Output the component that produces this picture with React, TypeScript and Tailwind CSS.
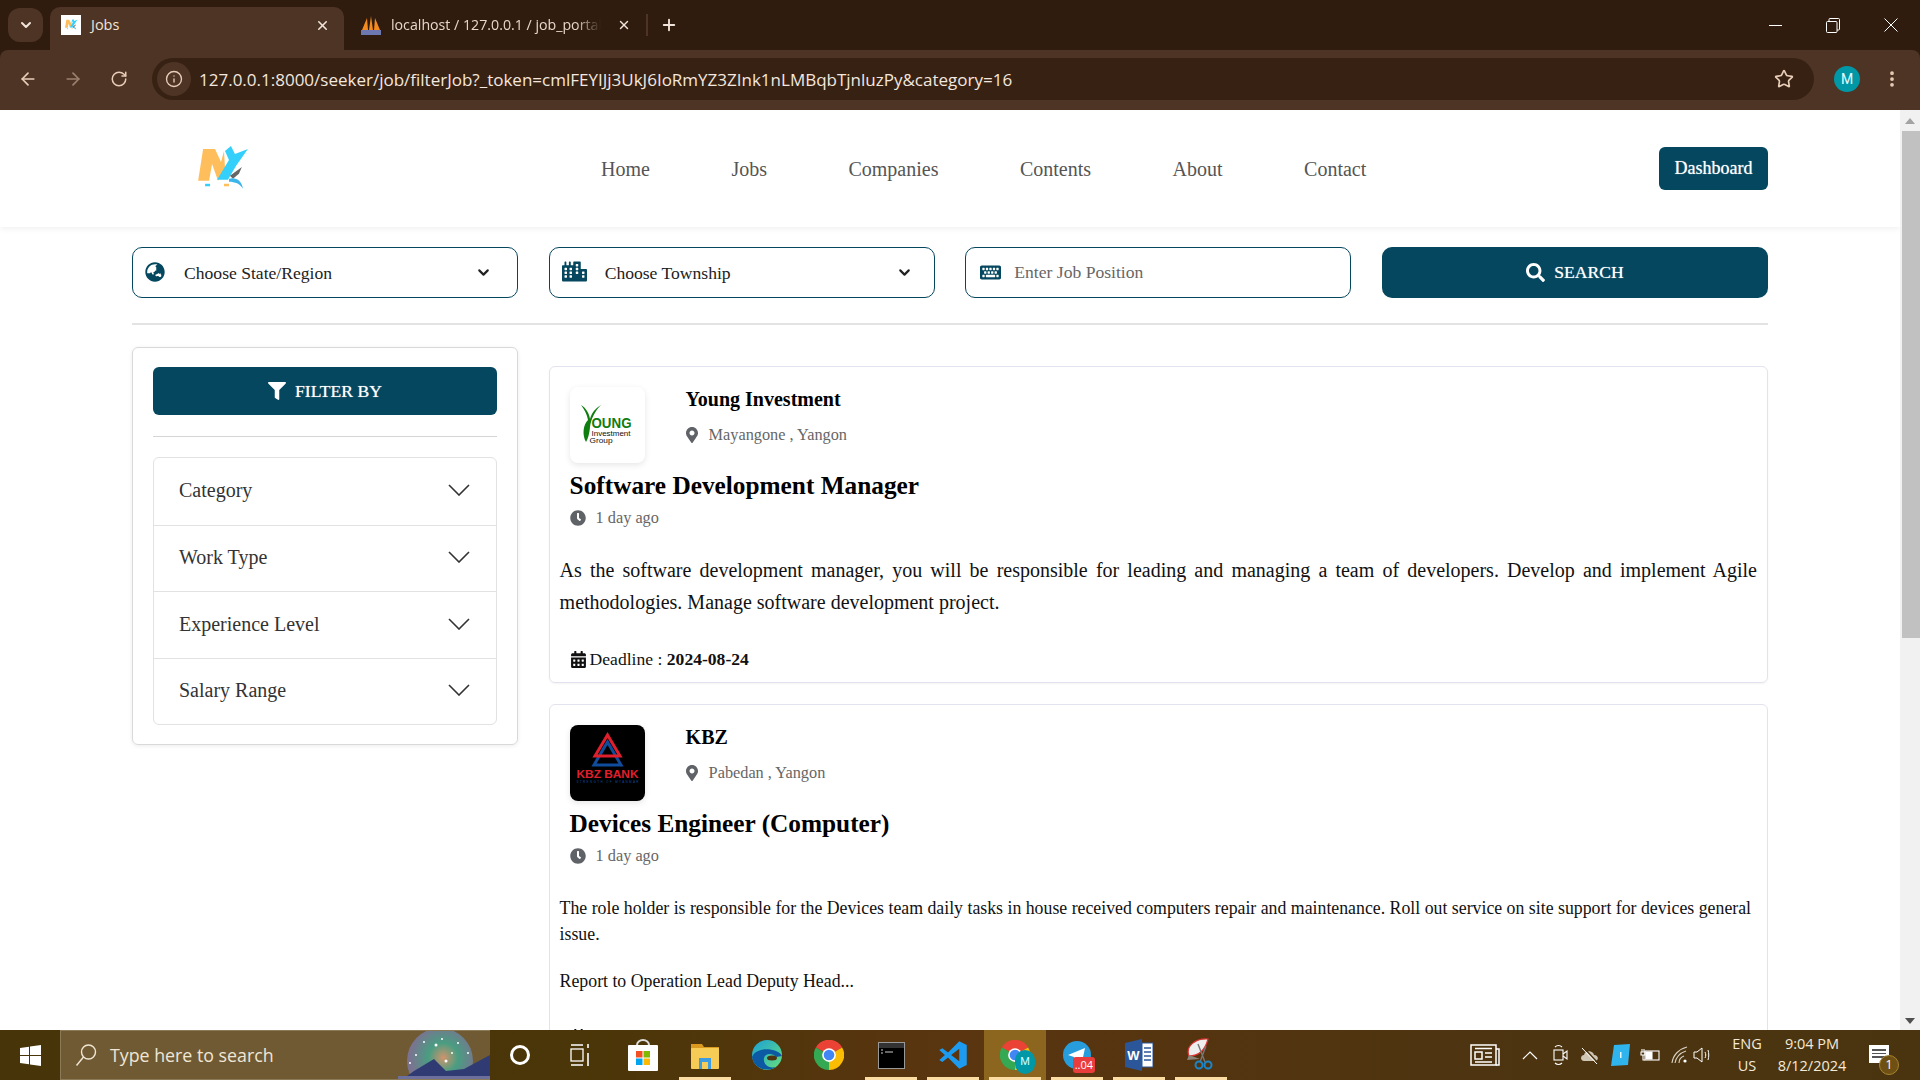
import { ArrowLeft, ArrowRight, ChevronDown, Info, MoreVertical, Plus, RotateCw, Star, X } from "lucide-react";
import { FaCalendarAlt, FaCity, FaClock, FaFilter, FaGlobeAsia, FaKeyboard, FaMapMarkerAlt, FaSearch } from "react-icons/fa";

const navLinks = ["Home", "Jobs", "Companies", "Contents", "About", "Contact"];
const filters = ["Category", "Work Type", "Experience Level", "Salary Range"];

function NxLogo({ size = 52 }: { size?: number }) {
    return (
        <svg width={size} height={size * 0.88} viewBox="0 0 52 46">
            <path d="M0 35 L5 3 L17 3 L23 16 L26 5 L27 22 L20 35 L14 18 L11 35 Z" fill="#ffbe5c" />
            <path d="M19 34 L31 14 L27 5 L33 0 L37 8 L50 3 L38 20 L30 34 Z" fill="#34d0fb" />
            <path d="M32 30 L44 21 L41 28 L35 33 Z" fill="#666" />
            <path d="M31 33 C38 31 44 35 45 43 C42 38 37 36 31 36 Z" fill="#3bb5ec" />
            <rect x="7" y="38" width="5" height="2.5" fill="#34d0fb" />
            <rect x="26" y="38" width="5" height="2.5" fill="#ffbe5c" />
        </svg>
    );
}

function YoungLogo() {
    return (
        <svg width="60" height="48" viewBox="0 0 60 48">
            <path d="M4 4 C9 7 12 12 13 18 C15 11 19 7 24 4 C18 10 14 18 13 26 C12.5 32 11 38 9 41 C5 34 6 24 11 19 C10 13 7 8 4 4 Z" fill="#0f7d0f" />
            <text x="14.5" y="27" fontFamily="Liberation Sans, sans-serif" fontSize="15" fontWeight="700" fill="#0f7d0f" textLength="40" lengthAdjust="spacingAndGlyphs">OUNG</text>
            <text x="14.5" y="34.5" fontFamily="Liberation Sans, sans-serif" fontSize="7.5" fill="#111" textLength="39" lengthAdjust="spacingAndGlyphs">Investment</text>
            <text x="12.5" y="41.5" fontFamily="Liberation Sans, sans-serif" fontSize="7.5" fill="#111" textLength="23" lengthAdjust="spacingAndGlyphs">Group</text>
        </svg>
    );
}

function KbzLogo() {
    return (
        <svg width="75" height="75" viewBox="0 0 75 75">
            <path d="M37.5 16 L24 39 H51 Z" fill="none" stroke="#0f4c9c" strokeWidth="3" />
            <path d="M37.5 9 L25 30 H50 Z" fill="none" stroke="#e01f2d" strokeWidth="3" />
            <text x="37.5" y="52" textAnchor="middle" fontFamily="Liberation Sans, sans-serif" fontSize="11" fontWeight="700" fill="#e01f2d" textLength="62" lengthAdjust="spacingAndGlyphs">KBZ BANK</text>
            <text x="37.5" y="56.5" textAnchor="middle" fontFamily="Liberation Sans, sans-serif" fontSize="3" fill="#0f4c9c" textLength="62">STRENGTH OF MYANMAR</text>
        </svg>
    );
}

function ChromeIcon({ size = 30 }: { size?: number }) {
    return (
        <svg width={size} height={size} viewBox="0 0 48 48">
            <path d="M24 24 L45 12 A24 24 0 0 0 3 12 Z" fill="#ea4335" />
            <path d="M24 24 L3 12 A24 24 0 0 0 24 48 Z" fill="#34a853" />
            <path d="M24 24 L24 48 A24 24 0 0 0 45 12 Z" fill="#fbbc04" />
            <circle cx="24" cy="24" r="11" fill="#fff" />
            <circle cx="24" cy="24" r="8.5" fill="#4285f4" />
        </svg>
    );
}

function TaskIcon({ children, active, running }: { children: React.ReactNode; active?: boolean; running?: boolean }) {
    return (
        <div className={`relative flex h-full w-[62px] items-center justify-center ${active ? "bg-[#8c651e]" : ""}`}>
            {children}
            {running && <div className="absolute bottom-0 left-[5px] right-[5px] h-[3px] bg-[#fbdca3]" />}
        </div>
    );
}

function BrowserChrome() {
    return (
        <div className="shrink-0 bg-[#2f1c0e] text-[#f1e4da]">
            <div className="flex h-[50px] items-end">
                <div className="mb-[8px] ml-[8px] flex h-[34px] w-[35px] items-center justify-center rounded-[12px] bg-[#4e3424]">
                    <ChevronDown size={16} strokeWidth={3} />
                </div>
                <div className="ml-[7px] flex h-[43px] w-[294px] items-center rounded-t-[10px] bg-[#4e3424] pb-[7px] pl-[11px] pr-[14px]">
                    <div className="flex h-[20px] w-[20px] items-center justify-center bg-white">
                        <NxLogo size={13} />
                    </div>
                    <span className="ml-[10px] flex-1 font-['Open_Sans',sans-serif] text-[14.5px]">Jobs</span>
                    <X size={15} strokeWidth={2.5} />
                </div>
                <div className="flex h-[43px] items-center pb-[7px] pl-[17px]">
                    <svg width="20" height="20" viewBox="0 0 20 20">
                        <path d="M1 15 L6 3 L7 15 Z M8 15 L10 1 L12 15 Z M13 15 L14 3 L19 15 Z" fill="#f58a1f" />
                        <rect x="0" y="15" width="20" height="5" fill="#6c78af" />
                    </svg>
                    <span className="ml-[10px] w-[210px] overflow-hidden whitespace-nowrap font-['Open_Sans',sans-serif] text-[14.2px] text-[#e6d7cb] [mask-image:linear-gradient(to_right,black_88%,transparent)]">
                        localhost / 127.0.0.1 / job_portal
                    </span>
                    <X size={14} strokeWidth={2.5} className="ml-[16px]" />
                    <div className="ml-[15px] h-[22px] w-[2px] bg-[#4e3424]" />
                    <Plus size={18} strokeWidth={2.5} className="ml-[12px]" />
                </div>
                <div className="flex-1" />
                <div className="flex h-full items-center">
                    <div className="flex w-[58px] justify-center">
                        <div className="h-[1px] w-[13px] bg-white" />
                    </div>
                    <div className="flex w-[58px] justify-center">
                        <svg width="14" height="15" viewBox="0 0 14 15" fill="none" stroke="white" strokeWidth="1">
                            <rect x="0.5" y="3.5" width="10.5" height="11" rx="1" />
                            <path d="M3 3 V1.5 a1 1 0 0 1 1-1 H12.5 a1 1 0 0 1 1 1 V11 a1 1 0 0 1-1 1 H11" />
                        </svg>
                    </div>
                    <div className="flex w-[58px] justify-center">
                        <svg width="14" height="14" viewBox="0 0 14 14" stroke="white" strokeWidth="1">
                            <path d="M0.5 0.5 L13.5 13.5 M13.5 0.5 L0.5 13.5" />
                        </svg>
                    </div>
                </div>
            </div>
            <div className="flex h-[60px] items-center rounded-t-[8px] bg-[#4e3424] pb-[2px] pl-[18px] pr-[18px] text-[#e8cdb9]">
                <ArrowLeft size={20} strokeWidth={2} />
                <ArrowRight size={20} strokeWidth={2} className="ml-[25px] opacity-50" />
                <RotateCw size={18} strokeWidth={2} className="ml-[27px]" />
                <div className="ml-[24px] flex h-[42px] w-[1662px] items-center rounded-full bg-[#372113] pl-[5px] pr-[20px]">
                    <div className="flex h-[34px] w-[34px] items-center justify-center rounded-full bg-[#4e3424]">
                        <Info size={18} strokeWidth={1.8} />
                    </div>
                    <span className="ml-[8px] mt-[2px] flex-1 whitespace-nowrap font-['Open_Sans',sans-serif] text-[17px] text-[#f3e7df]">
                        127.0.0.1:8000/seeker/job/filterJob?_token=cmlFEYIJj3UkJ6IoRmYZ3ZInk1nLMBqbTjnluzPy&category=16
                    </span>
                    <Star size={20} strokeWidth={2} />
                </div>
                <div className="ml-[20px] flex h-[26px] w-[26px] items-center justify-center rounded-full bg-[#0097a7] font-['Roboto',sans-serif] text-[14px] text-[#e8fbfd]">
                    M
                </div>
                <MoreVertical size={20} strokeWidth={2.5} className="ml-[22px]" />
            </div>
        </div>
    );
}

function Navbar() {
    return (
        <div className="flex h-[117px] shrink-0 items-center bg-white shadow-[0_2px_6px_rgba(0,0,0,0.06)]">
            <div className="ml-[198px] w-[403px]">
                <NxLogo />
            </div>
            <div className="flex gap-[81.5px] text-[20px] text-[#555]">
                {navLinks.map((l) => (
                    <span key={l}>{l}</span>
                ))}
            </div>
            <div className="flex-1" />
            <button className="mr-[132px] h-[43px] w-[109px] rounded-[6px] bg-[#04475f] text-[18px] text-white [text-shadow:0_0_1px_rgba(255,255,255,0.7)]">Dashboard</button>
        </div>
    );
}

function SearchBar() {
    return (
        <div className="grid grid-cols-4 gap-[30.6px] pt-[20px] text-[17.6px]">
            <div className="flex h-[51px] items-center rounded-[10px] border border-[#04475f] pl-[12px] pr-[25px] text-[#222]">
                <FaGlobeAsia size={20} color="#04475f" className="-mt-[2px]" />
                <span className="ml-[19px] mt-[2px] flex-1">Choose State/Region</span>
                <ChevronDown size={17} strokeWidth={3} />
            </div>
            <div className="flex h-[51px] items-center rounded-[10px] border border-[#04475f] pl-[12px] pr-[21px] text-[#222]">
                <FaCity size={25} color="#04475f" className="-mt-[2px]" />
                <span className="ml-[18px] mt-[2px] flex-1">Choose Township</span>
                <ChevronDown size={17} strokeWidth={3} />
            </div>
            <div className="flex h-[51px] items-center rounded-[10px] border border-[#04475f] pl-[14px] text-[#666]">
                <FaKeyboard size={21} color="#04475f" />
                <span className="ml-[13px]">Enter Job Position</span>
            </div>
            <button className="flex h-[51px] items-center justify-center rounded-[10px] bg-[#04475f] text-[17.6px] text-white [text-shadow:0_0_1px_rgba(255,255,255,0.7)]">
                <FaSearch size={19} />
                <span className="ml-[9px]">SEARCH</span>
            </button>
        </div>
    );
}

function Sidebar() {
    return (
        <div className="h-[398px] w-[386px] shrink-0 rounded-[6px] border border-[#d9d9d9] px-[20px] pt-[19px] shadow-[0_1px_4px_rgba(0,0,0,0.08)]">
            <button className="flex h-[48px] w-full items-center justify-center rounded-[6px] bg-[#04475f] text-[17.6px] text-white [text-shadow:0_0_1px_rgba(255,255,255,0.7)]">
                <FaFilter size={18} />
                <span className="ml-[9px]">FILTER BY</span>
            </button>
            <div className="mt-[21px] border-t border-[#d5d5d5]" />
            <div className="mt-[20px] overflow-hidden rounded-[6px] border border-[#e2e2e2]">
                {filters.map((f, i) => (
                    <div key={f} className={`flex h-[66.5px] items-center justify-between pb-[2px] pl-[25px] pr-[26px] text-[20px] text-[#333] ${i > 0 ? "border-t border-[#e2e2e2]" : ""}`}>
                        <span>{f}</span>
                        <svg width="22" height="12" viewBox="0 0 22 12" fill="none" stroke="#333" strokeWidth="1.6">
                            <path d="M1 1 L11 11 L21 1" />
                        </svg>
                    </div>
                ))}
            </div>
        </div>
    );
}

function JobHeader({ logo, dark, company, location, title }: { logo: React.ReactNode; dark?: boolean; company: string; location: string; title: string }) {
    return (
        <div className="px-[10px] pt-[10px]">
            <div className="flex">
                <div className={`flex h-[76px] w-[75px] items-center justify-center rounded-[8px] shadow-[0_2px_6px_rgba(0,0,0,0.1)] ${dark ? "bg-black" : "bg-white"}`}>
                    {logo}
                </div>
                <div className="ml-[41px]">
                    <div className="pt-[1px] text-[20px] font-bold leading-[22px] text-black">{company}</div>
                    <div className="mt-[13px] flex items-center text-[16.3px] text-[#666]">
                        <FaMapMarkerAlt size={16} color="#5f6368" className="-ml-[2px]" />
                        <span className="ml-[9px]">{location}</span>
                    </div>
                </div>
            </div>
            <h2 className="mt-[6px] text-[25.3px] font-bold leading-[32px] text-black">{title}</h2>
            <div className="mt-[5px] flex items-center text-[16.3px] text-[#666]">
                <FaClock size={16} color="#5f6368" />
                <span className="ml-[10px]">1 day ago</span>
            </div>
        </div>
    );
}

function Deadline({ date }: { date: string }) {
    return (
        <div className="flex items-center px-[10px] text-[17.6px] text-[#111]">
            <FaCalendarAlt size={17} className="-mt-[1px]" />
            <span className="ml-[3px]">
                Deadline : <b>{date}</b>
            </span>
        </div>
    );
}

function JobCards() {
    return (
        <div className="flex min-w-0 flex-1 flex-col gap-[21px] pt-[41px]">
            <div className="h-[317px] rounded-[6px] border border-[#e3e3ef] p-[10px] shadow-[0_1px_2px_rgba(0,0,0,0.05)]">
                <JobHeader logo={<YoungLogo />} company="Young Investment" location="Mayangone , Yangon" title="Software Development Manager" />
                <p className="mt-[25px] text-justify text-[20px] leading-[31.5px] text-[#111]">
                    As the software development manager, you will be responsible for leading and managing a team of developers. Develop and implement Agile methodologies. Manage software development project.
                </p>
                <div className="mt-[28px]">
                    <Deadline date="2024-08-24" />
                </div>
            </div>
            <div className="rounded-[6px] border border-[#e3e3ef] p-[10px]">
                <JobHeader logo={<KbzLogo />} dark company="KBZ" location="Pabedan , Yangon" title="Devices Engineer (Computer)" />
                <div className="mt-[27px] text-[17.8px] leading-[26px] text-[#111]">
                    <p>The role holder is responsible for the Devices team daily tasks in house received computers repair and maintenance. Roll out service on site support for devices general issue.</p>
                    <p className="mt-[21px]">Report to Operation Lead Deputy Head...</p>
                </div>
                <div className="mt-[30px]">
                    <Deadline date="2024-08-24" />
                </div>
            </div>
        </div>
    );
}

function Scrollbar() {
    return (
        <div className="flex w-[20px] shrink-0 flex-col items-end bg-[#f1f1f1]">
            <div className="flex h-[21px] w-full items-center justify-center">
                <div className="h-0 w-0 border-x-[5px] border-b-[6px] border-x-transparent border-b-[#a3a3a3]" />
            </div>
            <div className="h-[507px] w-[18px] bg-[#c1c1c1]" />
            <div className="flex-1" />
            <div className="flex h-[19px] w-full items-center justify-center">
                <div className="h-0 w-0 border-x-[5px] border-t-[6px] border-x-transparent border-t-[#505050]" />
            </div>
        </div>
    );
}

function Taskbar() {
    return (
        <div className="flex h-[50px] shrink-0 items-center bg-[linear-gradient(90deg,#473408,#4a3608_30%,#5a3510_50%,#4e3410_75%,#4a3410)] text-[#f4ead8]">
            <div className="flex h-full w-[60px] items-center justify-center">
                <svg width="21" height="21" viewBox="0 0 21 21" fill="#fff">
                    <path d="M0 3 L9 1.7 V10 H0 Z M10 1.5 L21 0 V10 H10 Z M0 11 H9 V19.3 L0 18 Z M10 11 H21 V21 L10 19.5 Z" />
                </svg>
            </div>
            <div className="relative flex h-full w-[430px] items-center overflow-hidden border-y border-l border-[#8b7a58] bg-[#705a33] pl-[14px]">
                <svg width="22" height="24" viewBox="0 0 22 24" fill="none" stroke="#f0e6d4" strokeWidth="1.4">
                    <circle cx="13.5" cy="9" r="7" />
                    <path d="M8.5 14 L1.5 22.5" />
                </svg>
                <span className="ml-[13px] font-['Open_Sans',sans-serif] text-[17.8px] text-[#efe6d6]">Type here to search</span>
                <svg width="92" height="50" viewBox="0 0 92 50" className="absolute right-0 top-0">
                    <defs>
                        <radialGradient id="glow" cx="55%" cy="45%" r="50%">
                            <stop offset="0%" stopColor="#e8a27a" />
                            <stop offset="45%" stopColor="#3fae95" />
                            <stop offset="100%" stopColor="#7c7aa8" />
                        </radialGradient>
                    </defs>
                    <circle cx="42" cy="30" r="33" fill="url(#glow)" opacity="0.8" />
                    <g fill="#fff">
                        <circle cx="38" cy="14" r="1.5" /><circle cx="48" cy="30" r="1.5" /><circle cx="18" cy="24" r="1" />
                        <circle cx="60" cy="12" r="1" /><circle cx="70" cy="22" r="1" /><circle cx="26" cy="11" r="1" />
                        <circle cx="44" cy="8" r="1" /><circle cx="54" cy="22" r="1" /><circle cx="12" cy="32" r="1" />
                    </g>
                    <path d="M2 50 L16 40 L36 28 L48 40 L66 38 L92 24 V50 Z" fill="#2f3b72" />
                    <rect x="0" y="45" width="92" height="5" fill="#6d6f9d" />
                </svg>
            </div>
            <div className="flex h-full w-[60px] items-center justify-center">
                <div className="h-[20px] w-[20px] rounded-full border-[3px] border-white" />
            </div>
            <div className="flex h-full w-[60px] items-center justify-center">
                <svg width="20" height="24" viewBox="0 0 20 24" fill="none" stroke="#fff" strokeWidth="1.3">
                    <path d="M1 2 H13 M1 22 H13" />
                    <rect x="1" y="6" width="12" height="12" />
                    <path d="M18 1 V5 M18 10 V23" strokeWidth="1.6" />
                </svg>
            </div>
            <div className="ml-[2px] flex h-full">
                <TaskIcon>
                    <svg width="30" height="32" viewBox="0 0 30 32">
                        <rect x="0" y="6" width="30" height="26" rx="1" fill="#fff" />
                        <path d="M9 6 a6 5 0 0 1 12 0" fill="none" stroke="#ddd" strokeWidth="2" />
                        <rect x="8" y="12" width="6.5" height="6.5" fill="#f25022" />
                        <rect x="15.5" y="12" width="6.5" height="6.5" fill="#7fba00" />
                        <rect x="8" y="19.5" width="6.5" height="6.5" fill="#00a4ef" />
                        <rect x="15.5" y="19.5" width="6.5" height="6.5" fill="#ffb900" />
                    </svg>
                </TaskIcon>
                <TaskIcon running>
                    <svg width="28" height="27" viewBox="0 0 28 27">
                        <path d="M0 2 H11 L13 5 H28 V10 H0 Z" fill="#d99a1f" />
                        <rect x="0" y="6" width="28" height="21" rx="1" fill="#f6cc57" />
                        <path d="M8 27 V16 H20 V27 H17 V20 H11 V27 Z" fill="#3d9be0" />
                    </svg>
                </TaskIcon>
                <TaskIcon>
                    <svg width="30" height="32" viewBox="0 0 30 30">
                        <defs>
                            <linearGradient id="edge" x1="0" y1="0" x2="1" y2="1">
                                <stop offset="0%" stopColor="#1aa0d8" />
                                <stop offset="100%" stopColor="#66e07a" />
                            </linearGradient>
                        </defs>
                        <circle cx="15" cy="15" r="15" fill="url(#edge)" />
                        <path d="M0 17 C2 28 14 33 24 27 C16 29 11 24 12 18 C13 13 21 13 24 17 L30 16 C26 8 4 6 0 17 Z" fill="#0c59a4" />
                        <ellipse cx="20" cy="18" rx="5" ry="2.5" fill="#4e3410" />
                    </svg>
                </TaskIcon>
                <TaskIcon>
                    <ChromeIcon />
                </TaskIcon>
                <TaskIcon running>
                    <svg width="27" height="27" viewBox="0 0 27 27">
                        <rect x="0" y="0" width="27" height="27" fill="#999" />
                        <rect x="1" y="6" width="25" height="20" fill="#000" />
                        <rect x="1" y="1" width="25" height="5" fill="#333" />
                        <path d="M3 8 h2 M3 11 h2 M7 10 h8" stroke="#ccc" strokeWidth="1" />
                    </svg>
                </TaskIcon>
                <TaskIcon running>
                    <svg width="30" height="30" viewBox="0 0 24 24">
                        <path d="M17 1 L8 10 L3.5 6.5 L1 8 L5.5 12 L1 16 L3.5 17.5 L8 14 L17 23 L23 20 V4 Z M17 7 V17 L10.5 12 Z" fill="#1d9bf0" />
                    </svg>
                </TaskIcon>
                <TaskIcon active running>
                    <div className="relative">
                        <ChromeIcon />
                        <div className="absolute -bottom-[4px] -right-[5px] flex h-[24px] w-[20px] items-center justify-center rounded-full bg-[#0097a7] font-['Roboto',sans-serif] text-[11px] text-[#cff]">M</div>
                    </div>
                </TaskIcon>
                <TaskIcon running>
                    <div className="relative">
                        <svg width="28" height="28" viewBox="0 0 28 28">
                            <circle cx="14" cy="14" r="14" fill="#279ddb" />
                            <path d="M5 14 L22 7 L19 21 L14 18 L12 21 L11 16 Z" fill="#fff" />
                        </svg>
                        <div className="absolute -bottom-[4px] -right-[4px] rounded-[3px] bg-[#e93c3c] px-[2px] font-['Open_Sans',sans-serif] text-[11px] leading-[16px] text-white">..04</div>
                    </div>
                </TaskIcon>
                <TaskIcon running>
                    <svg width="28" height="32" viewBox="0 0 28 32">
                        <path d="M0 4 L17 0 V32 L0 28 Z" fill="#2b579a" />
                        <rect x="17" y="4" width="11" height="24" fill="#fff" stroke="#2b579a" />
                        <path d="M19 9 H26 M19 13 H26 M19 17 H26 M19 21 H26" stroke="#2b579a" strokeWidth="1.5" />
                        <text x="8.5" y="21" textAnchor="middle" fontFamily="Liberation Sans, sans-serif" fontSize="13" fontWeight="700" fill="#fff">W</text>
                    </svg>
                </TaskIcon>
                <TaskIcon running>
                    <svg width="30" height="34" viewBox="0 0 30 34">
                        <path d="M3 18 C-1 8 10 0 22 1 C20 9 15 18 3 18 Z" fill="#eee" stroke="#d33" strokeWidth="1.2" />
                        <path d="M3 17 L1 22 L14 21 Z" fill="#8a8378" />
                        <path d="M12 6 L19 24 M20 8 L14 24" stroke="#777" strokeWidth="1.4" />
                        <circle cx="13" cy="27" r="3.5" fill="none" stroke="#1a86c8" strokeWidth="2" />
                        <circle cx="22" cy="27" r="3.5" fill="none" stroke="#1a86c8" strokeWidth="2" />
                    </svg>
                </TaskIcon>
            </div>
            <div className="flex-1" />
            <div className="flex h-full items-center font-['Open_Sans',sans-serif] text-[14.5px]">
                <svg width="30" height="24" viewBox="0 0 30 24" fill="none" stroke="#fff" strokeWidth="1.5">
                    <rect x="1" y="2" width="25" height="20" />
                    <path d="M26 6 H29 V22 H26" />
                    <rect x="5" y="9" width="7" height="7" />
                    <path d="M5 5.5 H22 M15 10 H22 M15 14 H22 M5 19 H22" />
                </svg>
                <svg width="16" height="9" viewBox="0 0 16 9" fill="none" stroke="#fff" strokeWidth="1.2" className="ml-[22px]">
                    <path d="M1 8 L8 1 L15 8" />
                </svg>
                <svg width="15" height="22" viewBox="0 0 15 22" fill="none" stroke="#fff" strokeWidth="1.1" className="ml-[15px]">
                    <rect x="1" y="6" width="9" height="10" />
                    <path d="M10 10 L14 7 V15 L10 12 M2 3 C4 1 7 1 9 3 M2 19 C4 21 7 21 9 19" />
                </svg>
                <svg width="20" height="18" viewBox="0 0 20 18" className="ml-[12px]">
                    <path d="M4 15 C0 15 0 9 4 9 C5 4 13 4 14 9 C19 9 19 15 15 15 Z" fill="#cfc6b5" />
                    <path d="M3 1 L18 17" stroke="#4a3410" strokeWidth="1.5" />
                    <path d="M2 2 L17 18" stroke="#fff" strokeWidth="1" />
                </svg>
                <svg width="19" height="22" viewBox="0 0 19 22" className="ml-[11px]">
                    <path d="M3 1 L19 0 L17 21 L0 22 Z" fill="#30b4ee" />
                    <rect x="9" y="8" width="1.5" height="6" fill="#e8f8ff" />
                </svg>
                <svg width="20" height="14" viewBox="0 0 20 14" fill="none" stroke="#fff" strokeWidth="1.1" className="ml-[10px]">
                    <rect x="5" y="3" width="14" height="9" />
                    <rect x="6" y="4" width="6" height="7" fill="#fff" />
                    <path d="M2 1 V4 M4 1 V4 M1 4 H5 V7 H1 Z M3 7 V12 H5" />
                </svg>
                <svg width="18" height="18" viewBox="0 0 18 18" fill="none" stroke="#d9d2c4" strokeWidth="1.1" className="ml-[11px]">
                    <path d="M1 17 C2 9 8 3 16 1 M4 17 C5 11 9 7 15 5 M8 17 C8 14 10 11 13 10" />
                    <circle cx="14" cy="15" r="1.6" fill="#fff" stroke="none" />
                </svg>
                <svg width="20" height="18" viewBox="0 0 20 18" fill="none" stroke="#fff" strokeWidth="1" className="ml-[4px]">
                    <path d="M1 6 H4 L9 2 V16 L4 12 H1 Z M12 6 C13 8 13 10 12 12 M15 4 C16 7 16 11 15 14" />
                </svg>
                <div className="ml-[19px] flex w-[30px] flex-col items-center leading-[22px]">
                    <span>ENG</span>
                    <span>US</span>
                </div>
                <div className="ml-[4px] flex w-[92px] flex-col items-center leading-[22px]">
                    <span>9:04 PM</span>
                    <span>8/12/2024</span>
                </div>
                <div className="relative ml-[11px] mr-[21px] mt-[10px] h-[30px] w-[30px]">
                    <div className="h-[18px] w-[20px] bg-white pt-[4px]">
                        <div className="mx-[3px] h-[1.5px] bg-[#555]" />
                        <div className="mx-[3px] mt-[2px] h-[1.5px] bg-[#555]" />
                        <div className="mx-[3px] mt-[2px] h-[1.5px] bg-[#555]" />
                    </div>
                    <div className="absolute bottom-0 right-0 flex h-[20px] w-[20px] items-center justify-center rounded-full border border-[#a58430] bg-[#6e5015] text-[13px] text-white">1</div>
                </div>
            </div>
        </div>
    );
}

export default function App() {
    return (
        <div className="flex h-screen w-screen flex-col overflow-hidden bg-white font-['Liberation_Serif',serif]">
            <BrowserChrome />
            <div className="flex min-h-0 flex-1">
                <div className="flex min-w-0 flex-1 flex-col overflow-hidden">
                    <Navbar />
                    <div className="ml-[132px] mr-[132px]">
                        <SearchBar />
                        <div className="mt-[25px] border-t-2 border-[#e3e3e3]" />
                        <div className="flex gap-[30.6px]">
                            <div className="pt-[22px]">
                                <Sidebar />
                            </div>
                            <JobCards />
                        </div>
                    </div>
                </div>
                <Scrollbar />
            </div>
            <Taskbar />
        </div>
    );
}
